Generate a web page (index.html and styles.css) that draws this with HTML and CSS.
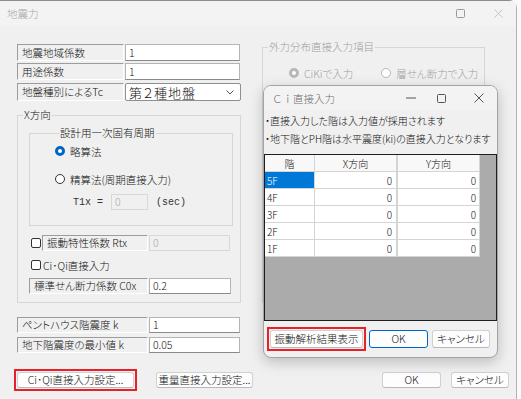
FILE: index.html
```html
<!DOCTYPE html>
<html lang="ja">
<head>
    <meta charset="UTF-8">
    <title>地震力</title>
    <link rel="stylesheet" href="styles.css">
</head>
<body>
<div class="window">
    <div class="titlebar">
        <span class="title">地震力</span>
        <svg class="tb-max" width="9" height="9" viewBox="0 0 9 9"><rect x="0.5" y="0.5" width="8" height="8" rx="1" fill="none" stroke="#9a9a9a"/></svg>
        <svg class="tb-close" width="9" height="9" viewBox="0 0 9 9"><path d="M0.5 0.5 L8.5 8.5 M8.5 0.5 L0.5 8.5" stroke="#c4c4c4" stroke-width="1"/></svg>
    </div>

    <div class="columns">
        <div class="left">
            <div class="row">
                <span class="label w107">地震地域係数</span>
                <span class="input w115">1</span>
            </div>
            <div class="row row2">
                <span class="label w107">用途係数</span>
                <span class="input w115">1</span>
            </div>
            <div class="row row3">
                <span class="label w107">地盤種別によるTc</span>
                <span class="select">第２種地盤
                    <svg class="chev" width="8" height="5" viewBox="0 0 8 5"><path d="M0.5 0.5 L4 4 L7.5 0.5" fill="none" stroke="#555"/></svg>
                </span>
            </div>

            <fieldset class="group gx">
                <legend>X方向</legend>
                <fieldset class="group gperiod">
                    <legend>設計用一次固有周期</legend>
                    <div class="opt opt1"><span class="radio on"></span>略算法</div>
                    <div class="opt opt2"><span class="radio"></span>精算法(周期直接入力)</div>
                    <div class="t1row">
                        <span class="mono t1">T1x =</span>
                        <span class="input disabled w37">0</span>
                        <span class="mono sec">(sec)</span>
                    </div>
                </fieldset>

                <div class="row chkrow">
                    <span class="check"></span>
                    <span class="label w106">振動特性係数 Rtx</span>
                    <span class="input disabled w81">0</span>
                </div>
                <div class="opt chk2"><span class="check"></span>Ci･Qi直接入力</div>
                <div class="row c0row">
                    <span class="label w119">標準せん断力係数 C0x</span>
                    <span class="input w82">0.2</span>
                </div>
            </fieldset>

            <div class="row ph1">
                <span class="label w131">ペントハウス階震度 k</span>
                <span class="input w91">1</span>
            </div>
            <div class="row ph2">
                <span class="label w131">地下階震度の最小値 k</span>
                <span class="input w91">0.05</span>
            </div>
        </div>

        <div class="right">
            <fieldset class="group gdist">
                <legend>外力分布直接入力項目</legend>
                <div class="distopts">
                    <span class="opt"><span class="radio dis on"></span>CiKiで入力</span>
                    <span class="opt opt-b"><span class="radio dis"></span>層せん断力で入力</span>
                </div>
            </fieldset>
        </div>
    </div>

    <div class="bottom">
        <span class="mark"><span class="btn b-ciqi">Ci･Qi直接入力設定...</span></span>
        <span class="btn b-weight">重量直接入力設定...</span>
        <span class="btn b-ok">OK</span>
        <span class="btn b-cancel">キャンセル</span>
    </div>

    <div class="dialog">
        <div class="dlg-title">
            <span class="dlg-name">Ｃｉ直接入力</span>
            <svg class="dlg-min" width="10" height="2" viewBox="0 0 10 2"><path d="M0 1 H10" stroke="#555"/></svg>
            <svg class="dlg-max" width="9" height="9" viewBox="0 0 9 9"><rect x="0.5" y="0.5" width="8" height="8" rx="1" fill="none" stroke="#555"/></svg>
            <svg class="dlg-close" width="10" height="10" viewBox="0 0 10 10"><path d="M0.5 0.5 L9.5 9.5 M9.5 0.5 L0.5 9.5" stroke="#555"/></svg>
        </div>
        <p class="note n1">・直接入力した階は入力値が採用されます</p>
        <p class="note n2">・地下階とPH階は水平震度(ki)の直接入力となります</p>

        <div class="grid">
            <div class="grow ghead">
                <span class="c0">階</span><span class="c1">X方向</span><span class="c2">Y方向</span>
            </div>
            <div class="grow"><span class="c0 sel">5F</span><span class="c1">0</span><span class="c2">0</span></div>
            <div class="grow"><span class="c0">4F</span><span class="c1">0</span><span class="c2">0</span></div>
            <div class="grow"><span class="c0">3F</span><span class="c1">0</span><span class="c2">0</span></div>
            <div class="grow"><span class="c0">2F</span><span class="c1">0</span><span class="c2">0</span></div>
            <div class="grow"><span class="c0">1F</span><span class="c1">0</span><span class="c2">0</span></div>
        </div>

        <div class="dlg-buttons">
            <span class="mark"><span class="btn d-vib">振動解析結果表示</span></span>
            <span class="btn d-ok">OK</span>
            <span class="btn d-cancel">キャンセル</span>
        </div>
    </div>
</div>
</body>
</html>
```

FILE: styles.css
```css
body {
    margin: 0;
    background: #fafafa;
    font-family: "Noto Sans CJK JP", "Noto Sans", sans-serif;
    font-size: 10.5px;
    font-weight: 300;
    color: #111;
}
.window {
    width: 517px;
    height: 399px;
    box-sizing: border-box;
    background: #f0f0f0;
    border-top: 1px solid #8c8c8c;
    border-right: 1px solid #b0b0b0;
    border-radius: 0 8px 0 0;
    position: relative;
    font-feature-settings: "palt";
}
.titlebar {
    height: 25px;
    display: flex;
    align-items: center;
    background: #f3f3f3;
}
.title {
    padding-left: 7px;
    color: #a4a4a4;
    font-size: 10.5px;
    flex: 1;
}
.tb-max { margin-right: 29px; }
.tb-close { margin-right: 13px; }

.columns {
    display: flex;
    padding: 18px 0 0 17px;
    gap: 21px;
}
.left { width: 224px; }
.right { width: 223px; }

.row {
    display: flex;
    height: 17px;
}
.row2 { margin-top: 2px; }
.row3 { margin-top: 3px; height: 18px; }

.label, .input {
    box-sizing: border-box;
    height: 100%;
    display: flex;
    align-items: center;
    line-height: 12px;
    white-space: nowrap;
}
.label {
    padding-left: 4px;
    border: 1px solid;
    border-color: #9c9c9c #ffffff #ffffff #9c9c9c;
    margin-right: 1px;
}
.input {
    padding-left: 3px;
    background: #fff;
    border: 1px solid #b4b4b4;
    border-bottom-color: #8a8a8a;
}
.input.disabled {
    background: #f0f0f0;
    border-color: #d8d8d8;
    color: #a8a8a8;
}
.w37 { width: 37px; }
.w81 { width: 81px; }
.w82 { width: 82px; }
.w91 { width: 91px; }
.w106 { width: 106px; }
.w107 { width: 107px; }
.w115 { width: 115px; }
.w119 { width: 119px; }
.w131 { width: 131px; }

.select {
    box-sizing: border-box;
    width: 116px;
    height: 18px;
    background: #fff;
    border: 1px solid #8f8f8f;
    border-radius: 2px;
    display: flex;
    align-items: center;
    padding-left: 3px;
    font-size: 13px;
    letter-spacing: 1px;
    position: relative;
}
.chev { position: absolute; right: 6px; top: 6px; }

.group {
    margin: 0;
    padding: 0;
    border: 1px solid #d6d6d6;
}
.group legend {
    padding: 0 1px;
    line-height: 12px;
    font-size: 10.5px;
}
.gx {
    margin-top: 8px;
    height: 194px;
    box-sizing: border-box;
}
.gx > legend { margin-left: 5px; }
.gperiod {
    margin: 6px 7px 0 11px;
    height: 99px;
    box-sizing: border-box;
    padding-left: 25px;
}
.gperiod > legend { margin-left: 4px; }

.opt {
    display: flex;
    align-items: center;
    height: 14px;
    white-space: nowrap;
}
.opt1 { margin-top: 5px; }
.opt2 { margin-top: 14px; }

.radio {
    width: 10px;
    height: 10px;
    box-sizing: border-box;
    border: 1px solid #333;
    border-radius: 50%;
    margin-right: 5px;
    background: #fff;
}
.radio.on {
    border: 3px solid #0067c0;
    background: #fff;
}
.radio.dis { border-color: #b8b8b8; }
.radio.dis.on { border: 3px solid #b8b8b8; }

.check {
    width: 10px;
    height: 10px;
    box-sizing: border-box;
    border: 1px solid #333;
    border-radius: 2px;
    background: #fff;
    margin-right: 1px;
    align-self: center;
}

.t1row {
    display: flex;
    align-items: center;
    height: 16px;
    margin-top: 8px;
}
.mono {
    font-family: "Liberation Mono", monospace;
    font-size: 10px;
    color: #333;
}
.t1 { margin-left: 18px; width: 38px; }
.sec { margin-left: 8px; }

.chkrow { margin: 9px 0 0 13px; height: 16px; }
.chk2 { margin: 7px 0 0 13px; }
.chk2 .check { margin-right: 2px; }
.c0row { margin: 6px 0 0 11px; height: 16px; }

.ph1 { margin-top: 14px; height: 16px; }
.ph2 { margin-top: 4px; height: 16px; }

.gdist {
    margin-top: -3px;
    height: 262px;
    box-sizing: border-box;
    color: #a0a0a0;
}
.gdist > legend { margin-left: 5px; }
.distopts {
    display: flex;
    margin: 13px 0 0 26px;
}
.opt-b { margin-left: 28px; }

.bottom {
    display: flex;
    padding-left: 17px;
    margin-top: 19px;
}
.btn {
    box-sizing: border-box;
    height: 16px;
    display: flex;
    align-items: center;
    justify-content: center;
    background: #fdfdfd;
    border: 1px solid #d0d0d0;
    border-bottom-color: #b8b8b8;
    border-radius: 3px;
    white-space: nowrap;
    line-height: 12px;
}
.mark {
    display: flex;
    margin: -3px;
    padding: 1px;
    border: 2px solid #e8202a;
}
.b-ciqi { width: 117px; }
.b-weight { width: 97px; margin-left: 22px; }
.b-ok { width: 59px; margin-left: auto; }
.b-cancel { width: 58px; margin-left: 10px; margin-right: 7px; }

.dialog {
    position: absolute;
    left: 263px;
    top: 84px;
    width: 235px;
    height: 273px;
    box-sizing: border-box;
    background: #f0f0f0;
    border: 1px solid #a4a4a4;
    border-radius: 8px;
    box-shadow: 0 4px 14px rgba(0, 0, 0, 0.22);
    overflow: hidden;
}
.dlg-title {
    height: 24px;
    display: flex;
    align-items: center;
    background: #f3f3f3;
}
.dlg-name {
    flex: 1;
    padding-left: 8px;
    color: #6e6e6e;
    font-size: 10.5px;
    font-feature-settings: normal;
}
.dlg-min { margin-right: 21px; }
.dlg-max { margin-right: 28px; }
.dlg-close { margin-right: 13px; }

.note {
    margin: 0;
    padding-left: 1px;
    line-height: 14px;
    font-size: 10px;
}
.n1 { margin-top: 4px; }
.n2 { margin-top: 4px; }

.grid {
    margin-top: 8px;
    height: 167px;
    box-sizing: border-box;
    border: 1px solid #1e1e1e;
    background: #ababab;
}
.grow {
    display: flex;
    height: 17px;
    font-size: 10px;
}
.grow span {
    box-sizing: border-box;
    display: flex;
    align-items: center;
    background: #fff;
    border-right: 1px solid #d4d4d4;
    border-bottom: 1px solid #d4d4d4;
}
.c0 { width: 50px; padding-left: 2px; }
.c1 { width: 83px; justify-content: flex-end; padding-right: 4px; border-right: 2px solid #d4d4d4 !important; }
.c2 { width: 82px; justify-content: flex-end; padding-right: 3px; }
.ghead span {
    justify-content: center;
    padding: 0;
    background: #f8f8f8;
}
.grow .sel { background: #0078d7; color: #fff; }

.dlg-buttons {
    display: flex;
    align-items: center;
    margin: 9px 0 0 6px;
    gap: 6px;
}
.dlg-buttons .btn { height: 18px; }
.d-vib { width: 93px; }
.d-ok {
    width: 59px;
    border-color: #0067c0;
}
.d-cancel { width: 58px; margin-left: -2px; }
```
